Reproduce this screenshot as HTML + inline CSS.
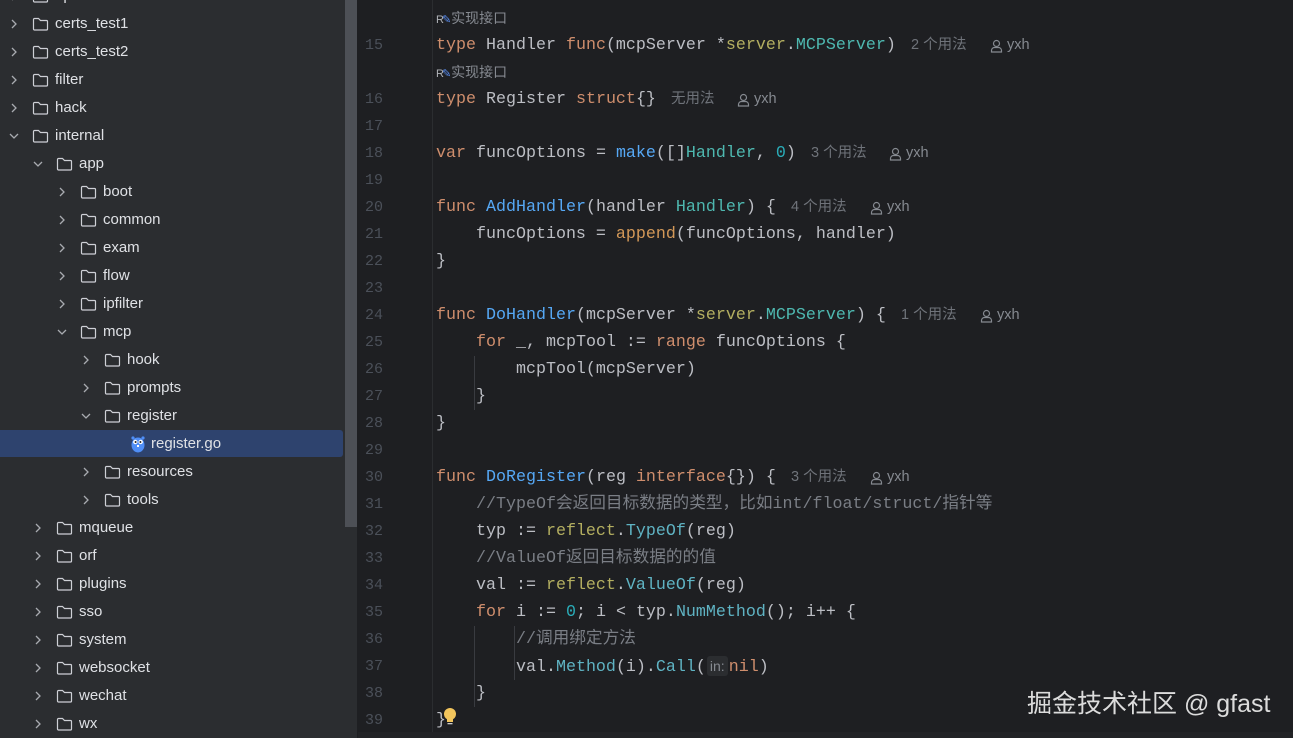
<!DOCTYPE html>
<html><head><meta charset="utf-8"><style>
*{margin:0;padding:0;box-sizing:border-box}
body{width:1293px;height:738px;overflow:hidden;background:#1e1f22;position:relative;font-family:"Liberation Sans","Noto Sans CJK SC",sans-serif}
#side{position:absolute;left:0;top:0;width:357px;height:738px;background:#2b2d30}
#sb{position:absolute;left:345px;top:0;width:12px;height:527px;background:#4d5056}
.row{position:absolute;height:28px;line-height:28px;font-size:15px;color:#dfe1e5;white-space:nowrap}
.sel{position:absolute;left:0;top:430px;width:343px;height:27px;background:#2e436e;border-radius:0 3px 3px 0}
.ar{position:absolute;top:0;width:14px;height:28px}
.fd{position:absolute;top:7px;width:17px;height:14px}
.ln{position:absolute;left:360px;width:23px;text-align:right;font-family:"Liberation Mono",monospace;font-size:15px;color:#4b5059;line-height:27px;height:27px}
.cl{position:absolute;left:436px;font-family:"Liberation Mono","Noto Sans CJK SC",monospace;font-size:16.67px;color:#bcbec4;line-height:27px;height:27px;white-space:pre}
.k{color:#cf8e6d}.f{color:#56a8f5}.t{color:#4eb8b0}.p{color:#b3ae60}.n{color:#2aacb8}.c{color:#7a7e85}.m{color:#5fb3c3}.o{color:#d39858}
.h{position:absolute;font-size:14.5px;color:#6f737a;line-height:27px;height:27px;white-space:nowrap}
.ih{position:absolute;font-size:14px;color:#868a91;line-height:27px;left:436px}
.gl{position:absolute;width:1px;background:#393b40}
</style></head><body>
<div id="side">
<div class="sel"></div>
<div id="sb"></div>
</div>
<div class="gl" style="left:432px;top:0;height:738px;background:#2b2d30"></div>
<div class="gl" style="left:474px;top:356px;height:54px"></div>
<div class="gl" style="left:474px;top:626px;height:81px"></div>
<div class="gl" style="left:514px;top:626px;height:54px"></div>
<div id="tree"></div>
<div id="code"></div>
<div style="position:absolute;left:1027px;top:684px;font-size:25px;color:#dcdcdc;font-family:'Liberation Sans','Noto Sans CJK SC',sans-serif">掘金技术社区 @ gfast</div>
<div style="position:absolute;left:358px;top:732px;width:935px;height:6px;background:#222326"></div>
<script>
var T=[[0,0,'api'],[0,0,'certs_test1'],[0,0,'certs_test2'],[0,0,'filter'],[0,0,'hack'],[0,1,'internal'],[1,1,'app'],[2,0,'boot'],[2,0,'common'],[2,0,'exam'],[2,0,'flow'],[2,0,'ipfilter'],[2,1,'mcp'],[3,0,'hook'],[3,0,'prompts'],[3,1,'register'],[4,2,'register.go'],[3,0,'resources'],[3,0,'tools'],[1,0,'mqueue'],[1,0,'orf'],[1,0,'plugins'],[1,0,'sso'],[1,0,'system'],[1,0,'websocket'],[1,0,'wechat'],[1,0,'wx']];
var h='';
T.forEach(function(r,i){var y=-18+i*28,x=r[0]*24;
h+='<div class="row" style="left:0;top:'+y+'px;width:343px">';
if(r[1]<2){
 var a=r[1]?'<path d="M3 5l4 4 4-4" stroke="#a8abb0" stroke-width="1.3" fill="none"/>':'<path d="M5 3l4 4-4 4" stroke="#a8abb0" stroke-width="1.3" fill="none"/>';
 h+='<svg class="ar" style="left:'+(x+7)+'px;top:7px;height:14px" viewBox="0 0 14 14">'+a+'</svg>';
 h+='<svg class="fd" style="left:'+(x+32)+'px" viewBox="0 0 17 14"><path d="M1.5 2.5a1 1 0 0 1 1-1h4l2 2h6a1 1 0 0 1 1 1v7.5a1 1 0 0 1-1 1h-12a1 1 0 0 1-1-1z" stroke="#ced0d6" stroke-width="1.2" fill="none"/></svg>';
 h+='<span style="position:absolute;left:'+(x+55)+'px">'+r[2]+'</span>';
}else{
 h+='<svg style="position:absolute;left:'+(x+34)+'px;top:5px" width="16" height="18" viewBox="0 0 16 18"><ellipse cx="8" cy="10" rx="6.5" ry="7.5" fill="#4f8ef7"/><circle cx="3" cy="3" r="1.6" fill="#4f8ef7"/><circle cx="13" cy="3" r="1.6" fill="#4f8ef7"/><circle cx="5.3" cy="7" r="2.2" fill="#fff"/><circle cx="10.7" cy="7" r="2.2" fill="#fff"/><circle cx="5.6" cy="7" r="1" fill="#222"/><circle cx="10.4" cy="7" r="1" fill="#222"/><rect x="7" y="10" width="2" height="2" fill="#fff"/></svg>';
 h+='<span style="position:absolute;left:'+(x+55)+'px">'+r[2]+'</span>';
}
h+='</div>';});
document.getElementById('tree').innerHTML=h;
function yc(n){return n==15?45:99+(n-16)*27;}
var L={15:'<span class="k">type</span> Handler <span class="k">func</span>(mcpServer *<span class="p">server</span>.<span class="t">MCPServer</span>)',
16:'<span class="k">type</span> Register <span class="k">struct</span>{}',17:'',
18:'<span class="k">var</span> funcOptions = <span class="f">make</span>([]<span class="t">Handler</span>, <span class="n">0</span>)',19:'',
20:'<span class="k">func</span> <span class="f">AddHandler</span>(handler <span class="t">Handler</span>) {',
21:'    funcOptions = <span class="o">append</span>(funcOptions, handler)',22:'}',23:'',
24:'<span class="k">func</span> <span class="f">DoHandler</span>(mcpServer *<span class="p">server</span>.<span class="t">MCPServer</span>) {',
25:'    <span class="k">for</span> _, mcpTool := <span class="k">range</span> funcOptions {',26:'        mcpTool(mcpServer)',27:'    }',28:'}',29:'',
30:'<span class="k">func</span> <span class="f">DoRegister</span>(reg <span class="k">interface</span>{}) {',
31:'    <span class="c">//TypeOf会返回目标数据的类型，比如int/float/struct/指针等</span>',
32:'    typ := <span class="p">reflect</span>.<span class="m">TypeOf</span>(reg)',
33:'    <span class="c">//ValueOf返回目标数据的的值</span>',
34:'    val := <span class="p">reflect</span>.<span class="m">ValueOf</span>(reg)',
35:'    <span class="k">for</span> i := <span class="n">0</span>; i &lt; typ.<span class="m">NumMethod</span>(); i++ {',
36:'        <span class="c">//调用绑定方法</span>',
37:'        val.<span class="m">Method</span>(i).<span class="m">Call</span>(<span style="background:#2b2d30;color:#868a91;font-family:\'Liberation Sans\',sans-serif;font-size:14px;border-radius:3px;padding:2px 3px;margin:0 1px">in:</span><span class="k">nil</span>)',
38:'    }',39:'}'};
var c='';
for(var n=15;n<=39;n++){var y=yc(n)-13.5;
c+='<div class="ln" style="top:'+y+'px">'+n+'</div><div class="cl" style="top:'+y+'px">'+L[n]+'</div>';}
var H=[[15,'2 个用法',911,990],[16,'无用法',671,737],[18,'3 个用法',811,889],[20,'4 个用法',791,870],[24,'1 个用法',901,980],[30,'3 个用法',791,870]];
H.forEach(function(a){var y=yc(a[0])-13.5;
c+='<div class="h" style="left:'+a[2]+'px;top:'+y+'px">'+a[1]+'</div>';
c+='<svg style="position:absolute;left:'+a[3]+'px;top:'+(y+7)+'px" width="13" height="14" viewBox="0 0 13 14"><circle cx="6.5" cy="4.5" r="3" stroke="#868a91" stroke-width="1.2" fill="none"/><path d="M1.5 13v-1.5a3 3 0 0 1 3-3h4a3 3 0 0 1 3 3V13z" stroke="#868a91" stroke-width="1.2" fill="none"/></svg>';
c+='<div class="h" style="left:'+(a[3]+17)+'px;top:'+y+'px;color:#868a91">yxh</div>';});
[18,72].forEach(function(y){c+='<div class="ih" style="top:'+(y-13.5)+'px"><span style="font-size:11px;color:#b0b3b8">R</span><span style="color:#5a8df0;font-size:11px;margin-left:-2px">✎</span>实现接口</div>';});
c+='<svg style="position:absolute;left:443px;top:707px" width="14" height="20" viewBox="0 0 14 20"><circle cx="7" cy="7" r="6" fill="#f2c55c"/><rect x="4" y="12" width="6" height="3" fill="#f2c55c"/><rect x="4.5" y="16" width="5" height="1.3" fill="#ccc"/></svg>';
document.getElementById('code').innerHTML=c;
</script>
</body></html>
